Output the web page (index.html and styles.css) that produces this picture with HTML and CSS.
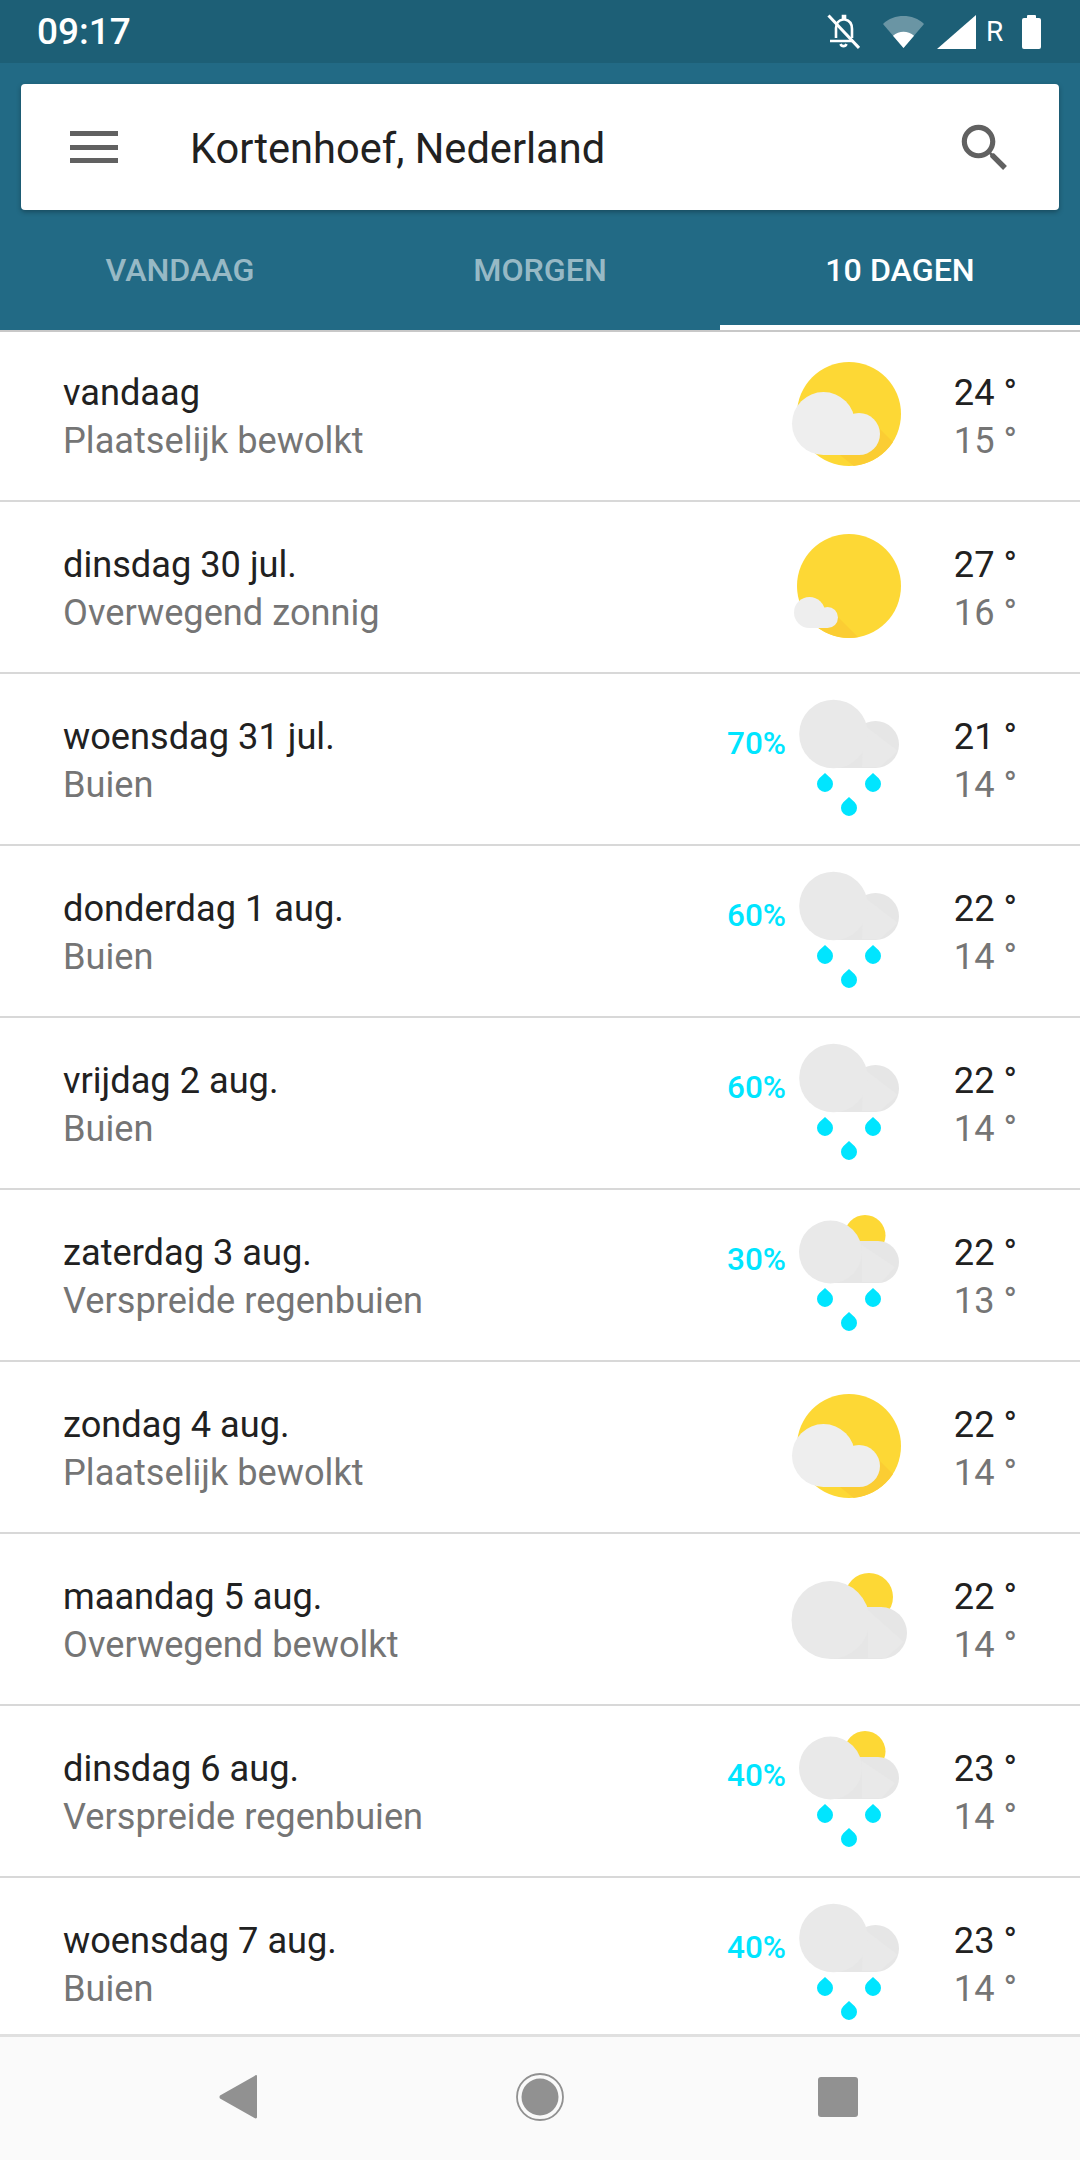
FILE: index.html
```html
<!DOCTYPE html>
<html lang="nl">
<head>
  <meta charset="UTF-8">
  <meta name="viewport" content="width=device-width, initial-scale=1.0">
  <title>Kortenhoef, Nederland</title>
  <link rel="stylesheet" href="styles.css">
</head>
<body>
  <!-- Shared weather icons -->
  <svg class="defs" width="0" height="0">
    <defs>
      <clipPath id="sun-clip"><circle cx="59" cy="59" r="52"/></clipPath>
      <path id="drop" class="drop" d="M8 0 L13.7 5.3 A8 8 0 1 1 2.3 5.3 Z"/>

      <symbol id="partly-cloudy" viewBox="0 0 120 120">
        <circle class="sun" cx="59" cy="59" r="52"/>
        <polygon class="sun-shade" clip-path="url(#sun-clip)" points="88,72 130,114 100,140 50,100"/>
        <circle class="cloud" cx="33.5" cy="68.5" r="31.5"/>
        <circle class="cloud" cx="69" cy="79" r="21"/>
        <rect class="cloud" x="33.5" y="70" width="36" height="30"/>
      </symbol>

      <symbol id="mostly-sunny" viewBox="0 0 120 120">
        <circle class="sun" cx="59" cy="59" r="52"/>
        <polygon class="sun-shade" clip-path="url(#sun-clip)" points="42,84 90,132 50,130 22,100"/>
        <circle class="cloud" cx="19.5" cy="85.5" r="15.5"/>
        <circle class="cloud" cx="37.5" cy="90.5" r="10.5"/>
        <rect class="cloud" x="19.5" y="86" width="18" height="15"/>
      </symbol>

      <symbol id="rain" viewBox="0 0 120 120">
        <circle class="cloud-back" cx="85.5" cy="45.5" r="23.5"/>
        <rect class="cloud-back" x="43" y="45" width="43" height="24"/>
        <polygon class="cloud-shade" points="74,26 108,52 90,68 72,68"/>
        <circle class="cloud-front" cx="43.5" cy="35" r="34.3"/>
        <use href="#drop" x="27" y="74"/>
        <use href="#drop" x="75" y="74"/>
        <use href="#drop" x="51" y="98"/>
      </symbol>

      <symbol id="rain-sun" viewBox="0 0 120 120">
        <circle class="sun" cx="75" cy="20.5" r="20.5"/>
        <circle class="cloud-back" cx="88" cy="47" r="21"/>
        <rect class="cloud-back" x="40" y="26" width="48" height="42"/>
        <polygon class="cloud-shade" points="72,30 105,52 92,67 72,67"/>
        <circle class="cloud-front" cx="40.5" cy="37" r="31.5"/>
        <use href="#drop" x="27" y="73"/>
        <use href="#drop" x="75" y="73"/>
        <use href="#drop" x="51" y="97"/>
      </symbol>

      <symbol id="mostly-cloudy" viewBox="0 0 120 120">
        <circle class="sun" cx="79" cy="38" r="24"/>
        <circle class="cloud-back" cx="91" cy="74" r="26"/>
        <rect class="cloud-back" x="40" y="48" width="52" height="52"/>
        <polygon class="cloud-shade" points="78,51 114,83 96,99 78,99"/>
        <circle class="cloud-front" cx="40.5" cy="61" r="39"/>
      </symbol>
    </defs>
  </svg>

  <header class="appbar">
    <!-- Status bar -->
    <div class="statusbar">
      <span class="clock">09:17</span>
      <div class="status-icons">
        <svg class="st-bell" width="33" height="35" viewBox="0 0 33 35">
          <path d="M9 24 V14 C9 9 12 6 16 5.500 V2 H18 V5.500 C23 6.500 25 10 25 15 V24 M3 27 H26 M13.500 30 A3.200 3.200 0 0 0 19.500 30" fill="none" stroke="#fff" stroke-width="2.600"/>
          <path d="M1.500 1.500 L32 34" stroke="#fff" stroke-width="3"/>
        </svg>
        <svg class="st-wifi" width="41" height="32" viewBox="0 0 41 32">
          <path d="M0 8 C11 -2.600 30 -2.600 41 8 L20.500 32 Z" fill="#fff" fill-opacity="0.34"/>
          <path d="M10 19.700 C16 14.500 25 14.500 31 19.700 L20.500 32 Z" fill="#fff"/>
        </svg>
        <svg class="st-signal" width="39" height="34" viewBox="0 0 39 34">
          <polygon points="39,0 39,34 0,34" fill="#fff"/>
        </svg>
        <span class="st-roam">R</span>
        <svg class="st-battery" width="19" height="34" viewBox="0 0 19 34">
          <path d="M5 3 V1 Q5 0 6 0 H13 Q14 0 14 1 V3 H17 Q19 3 19 5 V32 Q19 34 17 34 H2 Q0 34 0 32 V5 Q0 3 2 3 Z" fill="#fff"/>
        </svg>
      </div>
    </div>

    <!-- Search card -->
    <div class="searchcard">
      <div class="burger"><i></i><i></i><i></i></div>
      <div class="place">Kortenhoef, Nederland</div>
      <svg class="search-icon" width="62" height="62" viewBox="0 0 24 24">
        <path d="M15.500 14h-.79l-.28-.27C15.410 12.590 16 11.110 16 9.500 16 5.910 13.090 3 9.500 3S3 5.910 3 9.500 5.910 16 9.500 16c1.610 0 3.090-.59 4.230-1.570l.27.28v.79l5 4.990L20.490 19l-4.990-5zm-6 0C7.010 14 5 11.990 5 9.500S7.010 5 9.500 5 14 7.010 14 9.500 11.990 14 9.500 14z" fill="#616161"/>
      </svg>
    </div>

    <!-- Tabs -->
    <nav class="tabs">
      <a class="tab">VANDAAG</a>
      <a class="tab">MORGEN</a>
      <a class="tab active">10 DAGEN</a>
    </nav>
  </header>

  <!-- Forecast list -->
  <main class="forecast">
    <div class="row">
      <div class="day"><div class="title">vandaag</div><div class="sub">Plaatselijk bewolkt</div></div>
      <svg class="wx"><use href="#partly-cloudy"/></svg>
      <div class="temps"><div class="high">24 °</div><div class="low">15 °</div></div>
    </div>
    <div class="row">
      <div class="day"><div class="title">dinsdag 30 jul.</div><div class="sub">Overwegend zonnig</div></div>
      <svg class="wx"><use href="#mostly-sunny"/></svg>
      <div class="temps"><div class="high">27 °</div><div class="low">16 °</div></div>
    </div>
    <div class="row">
      <div class="day"><div class="title">woensdag 31 jul.</div><div class="sub">Buien</div></div>
      <div class="pct">70%</div>
      <svg class="wx"><use href="#rain"/></svg>
      <div class="temps"><div class="high">21 °</div><div class="low">14 °</div></div>
    </div>
    <div class="row">
      <div class="day"><div class="title">donderdag 1 aug.</div><div class="sub">Buien</div></div>
      <div class="pct">60%</div>
      <svg class="wx"><use href="#rain"/></svg>
      <div class="temps"><div class="high">22 °</div><div class="low">14 °</div></div>
    </div>
    <div class="row">
      <div class="day"><div class="title">vrijdag 2 aug.</div><div class="sub">Buien</div></div>
      <div class="pct">60%</div>
      <svg class="wx"><use href="#rain"/></svg>
      <div class="temps"><div class="high">22 °</div><div class="low">14 °</div></div>
    </div>
    <div class="row">
      <div class="day"><div class="title">zaterdag 3 aug.</div><div class="sub">Verspreide regenbuien</div></div>
      <div class="pct">30%</div>
      <svg class="wx"><use href="#rain-sun"/></svg>
      <div class="temps"><div class="high">22 °</div><div class="low">13 °</div></div>
    </div>
    <div class="row">
      <div class="day"><div class="title">zondag 4 aug.</div><div class="sub">Plaatselijk bewolkt</div></div>
      <svg class="wx"><use href="#partly-cloudy"/></svg>
      <div class="temps"><div class="high">22 °</div><div class="low">14 °</div></div>
    </div>
    <div class="row">
      <div class="day"><div class="title">maandag 5 aug.</div><div class="sub">Overwegend bewolkt</div></div>
      <svg class="wx"><use href="#mostly-cloudy"/></svg>
      <div class="temps"><div class="high">22 °</div><div class="low">14 °</div></div>
    </div>
    <div class="row">
      <div class="day"><div class="title">dinsdag 6 aug.</div><div class="sub">Verspreide regenbuien</div></div>
      <div class="pct">40%</div>
      <svg class="wx"><use href="#rain-sun"/></svg>
      <div class="temps"><div class="high">23 °</div><div class="low">14 °</div></div>
    </div>
    <div class="row">
      <div class="day"><div class="title">woensdag 7 aug.</div><div class="sub">Buien</div></div>
      <div class="pct">40%</div>
      <svg class="wx"><use href="#rain"/></svg>
      <div class="temps"><div class="high">23 °</div><div class="low">14 °</div></div>
    </div>
  </main>

  <!-- Android navigation -->
  <footer class="navbar">
    <svg width="48" height="48" viewBox="0 0 48 48">
      <path d="M41 2.500 V44.500 Q40 46 38.500 45 L4 25.500 Q3 24 4 22.500 L38.500 3 Q40 1.500 41 2.500 Z" class="nav-fill"/>
    </svg>
    <svg width="48" height="48" viewBox="0 0 48 48">
      <circle cx="24" cy="24" r="23" fill="none" stroke="#919191" stroke-width="1.800"/>
      <circle cx="24" cy="24" r="18.500" class="nav-fill"/>
    </svg>
    <svg width="48" height="48" viewBox="0 0 48 48">
      <rect x="2" y="4" width="40" height="40" rx="3" class="nav-fill"/>
    </svg>
  </footer>
</body>
</html>
```

FILE: styles.css
```css
* {
  box-sizing: border-box;
}
html, body {
  margin: 0;
  height: 100%;
}
body {
  height: 2160px;
  overflow: hidden;
  display: flex;
  flex-direction: column;
  font-family: Roboto, "Liberation Sans", sans-serif;
  background-color: #ffffff;
  color: #212121;
}
.defs {
  position: absolute;
}

/* App bar */
.appbar {
  height: 330px;
  flex: none;
  background-color: #226a85;
  box-shadow: 0 2px 0 #c8c8c8;
  position: relative;
  z-index: 2;
}
.statusbar {
  height: 63px;
  padding: 0 39px 0 37px;
  display: flex;
  justify-content: space-between;
  align-items: center;
  background-color: #1d5f76;
  color: #ffffff;
}
.clock {
  font-size: 37px;
  font-weight: 500;
}
.status-icons {
  display: flex;
  align-items: center;
}
.status-icons svg {
  display: block;
}
.st-wifi {
  margin-left: 23px;
}
.st-signal {
  margin-left: 13px;
}
.st-roam {
  margin-left: 10px;
  width: 17px;
  font-size: 28px;
  font-weight: 400;
  line-height: 34px;
}
.st-battery {
  margin-left: 19px;
}

/* Search */
.searchcard {
  height: 126px;
  margin: 21px 21px 0;
  padding: 2px 43px 0 49px;
  display: flex;
  align-items: center;
  background-color: #ffffff;
  border-radius: 4px;
  box-shadow: 0 2px 5px rgba(0, 0, 0, 0.3);
}
.burger {
  width: 48px;
  margin-top: -2px;
  display: flex;
  flex-direction: column;
  gap: 8.500px;
}
.burger i {
  display: block;
  height: 5px;
  background-color: #616161;
}
.place {
  flex: 1;
  margin-left: 72px;
  font-size: 41.600px;
  color: #212121;
}
.search-icon {
  display: block;
}

/* Tabs */
.tabs {
  height: 120px;
  display: grid;
  grid-template-columns: repeat(3, 1fr);
}
.tab {
  display: flex;
  align-items: center;
  justify-content: center;
  font-size: 32.200px;
  font-weight: 500;
  color: rgba(255, 255, 255, 0.55);
}
.tab.active {
  color: #ffffff;
  border-bottom: 5px solid #ffffff;
  padding-top: 5px;
}

/* Forecast */
.forecast {
  flex: 1;
  min-height: 0;
  overflow: hidden;
}
.row {
  height: 172px;
  padding: 0 63px;
  display: flex;
  align-items: center;
  border-bottom: 2px solid #d8d8d8;
}
.day {
  flex: 1;
  padding-top: 4px;
}
.title, .high {
  font-size: 36.200px;
  line-height: 48px;
  color: #212121;
}
.sub, .low {
  font-size: 36.200px;
  line-height: 48px;
  color: #757575;
}
.pct {
  align-self: flex-start;
  margin: 50px 4px 0 0;
  font-size: 31.500px;
  line-height: 40px;
  font-weight: 500;
  color: #00e5ff;
}
.wx {
  width: 120px;
  height: 120px;
  flex: none;
  display: block;
}
.temps {
  width: 80px;
  margin-left: 27px;
  padding-top: 4px;
  text-align: right;
  white-space: nowrap;
}

/* Icon paints */
.sun {
  fill: #fdd835;
}
.sun-shade {
  fill: #fbcd33;
}
.cloud {
  fill: #eeeeee;
}
.cloud-front {
  fill: #e9e9e9;
}
.cloud-back {
  fill: #e6e6e6;
}
.cloud-shade {
  fill: #e9e9e9;
}
.drop {
  fill: #00e5ff;
}

/* Bottom navigation */
.navbar {
  height: 126px;
  flex: none;
  padding-bottom: 3px;
  display: flex;
  justify-content: center;
  align-items: center;
  gap: 252px;
  background-color: #fafafa;
  border-top: 3px solid #e0e0e0;
  position: relative;
  z-index: 2;
}
.nav-fill {
  fill: #919191;
}
```
